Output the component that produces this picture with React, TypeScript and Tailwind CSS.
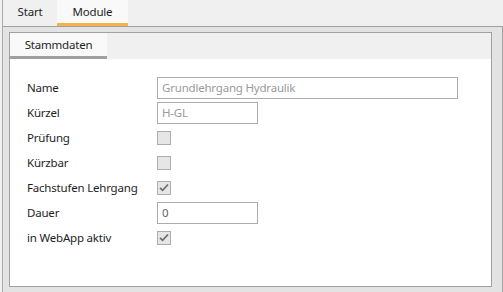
function Check({ checked }: { checked?: boolean }) {
  return (
    <div className="w-[14px] h-[14px] border border-[#adadad] bg-[#e6e6e6] flex items-center justify-center">
      {checked && (
        <svg width="10" height="9" viewBox="0 0 10 9">
          <path d="M1 4.8 L3.6 7.3 L9 1.5" fill="none" stroke="#6e6e6e" strokeWidth="1.8" />
        </svg>
      )}
    </div>
  );
}

function Input({ value, w, light }: { value: string; w: string; light?: boolean }) {
  return (
    <div className={`${w} h-[22px] border border-[#acacac] bg-white flex items-center px-[4px] ${light ? "text-[#9a9a9a]" : "text-[#5f5f5f]"}`}>
      {value}
    </div>
  );
}

const rows: { label: string; field: React.ReactNode }[] = [
  { label: "Name", field: <Input value="Grundlehrgang Hydraulik" w="w-[301px]" light /> },
  { label: "Kürzel", field: <Input value="H-GL" w="w-[101px]" light /> },
  { label: "Prüfung", field: <Check /> },
  { label: "Kürzbar", field: <Check /> },
  { label: "Fachstufen Lehrgang", field: <Check checked /> },
  { label: "Dauer", field: <Input value="0" w="w-[101px]" /> },
  { label: "in WebApp aktiv", field: <Check checked /> },
];

export default function App() {
  return (
    <div className="w-[503px] h-[292px] bg-[#f0f0f0] flex flex-col text-[11.5px] tracking-[-0.2px] text-[#1e1e1e] font-['Noto_Sans',sans-serif] overflow-hidden">
      <div className="ml-[2px] border-l border-[#ababab] flex flex-col flex-1">
        {/* Top tabs */}
        <div className="h-[26px] flex">
          <div className="w-[54px] h-[23px] flex items-center justify-center">Start</div>
          <div className="w-[71px] h-[26px] bg-[#f9f9f9] border-b-[3px] border-[#f6b24d] flex items-center justify-center">
            Module
          </div>
        </div>

        <div className="flex-1 bg-[#e3e3e3] border-t border-r border-[#a0a0a0] pt-[5px] pl-[6px] pr-[10px]">
          <div className="h-[255px] border border-[#a0a0a0] flex flex-col">
            <div className="h-[26px] bg-[#f0f0f0] flex">
              <div className="w-[97px] bg-[#f9f9f9] border-b-[3px] border-[#a0a0a0] flex items-center justify-center">
                Stammdaten
              </div>
            </div>
            <div className="flex-1 bg-white pt-[16px] pl-[17px]">
              {rows.map((r) => (
                <div key={r.label} className="h-[25px] flex items-center">
                  <div className="w-[130px]">{r.label}</div>
                  {r.field}
                </div>
              ))}
            </div>
          </div>
        </div>
      </div>
    </div>
  );
}
